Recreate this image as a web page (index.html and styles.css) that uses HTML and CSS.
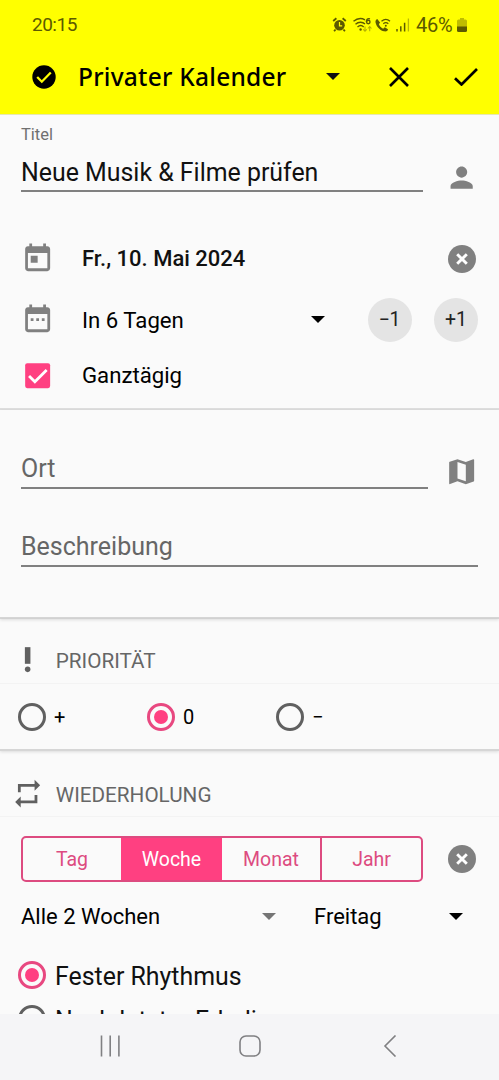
FILE: index.html
```html
<!DOCTYPE html>
<html lang="de">
<head>
<meta charset="utf-8">
<title>Privater Kalender</title>
<link rel="stylesheet" href="styles.css">
</head>
<body>
<svg width="0" height="0" class="defs">
  <symbol id="clear" viewBox="0 0 28 28"><circle cx="14" cy="14" r="14" fill="#808080"/><path d="M9.200 9.200l9.600 9.600M18.800 9.200l-9.600 9.600" stroke="#fff" stroke-width="2.900"/></symbol>
  <symbol id="caret" viewBox="0 0 14 7"><path d="M0 0h14L7 7z" fill="currentColor"/></symbol>
</svg>
<header class="top">
  <div class="status">
    <span class="time">20:15</span>
    <svg class="indicators" viewBox="0 0 78 18" fill="none" stroke="#5c5a00">
      <g><circle cx="7.500" cy="9.300" r="5.300" fill="#5c5a00" stroke="none"/><path d="M1.200 5l3.200-2.800M13.800 5l-3.200-2.800M3.500 13.500l-1.400 1.800M11.500 13.500l1.400 1.800" stroke-width="1.800"/><path d="M7.500 6v3.800h2.700" stroke="#ff0" stroke-width="1.200"/></g>
      <g stroke-width="1.400"><path d="M21.500 5.300c4-3.400 8.500-3.200 11.500-1.500M23.500 8.300c3-2.600 7-2.600 9.500-.3M25.500 11c2-1.700 4.500-1.700 6.200 0"/><circle cx="28.600" cy="13.500" r="1.200" fill="#5c5a00" stroke="none"/><path d="M38 2.800c-2.500-.8-3.800.8-3.600 3.200"/><circle cx="36.300" cy="6" r="1.700"/><path d="M33 10.500v4.800m-1.800-2l1.800 2 1.800-2M37.700 15.300v-4.800m-1.800 2l1.800-2 1.800 2" stroke="#b5b200" stroke-width="1.100"/></g>
      <path d="M45.300 2.900c-2 .7-2.300 2.600-1.300 5.100 1.500 3.800 4.700 6.700 8 7.300 2.200.4 3.700-.4 4-2.100l-3.200-2-1.700 1.500c-2.200-1-3.500-2.600-4.300-4.700l1.400-1.300z" fill="#5c5a00" stroke="none"/>
      <path d="M49.500 5.200c2.700-2.200 6-2.200 8.500 0M51.300 7.700c1.600-1.300 3.500-1.300 5 0" stroke-width="1.300"/><circle cx="53.800" cy="9.700" r="1" fill="#5c5a00" stroke="none"/>
      <path d="M65 15.500v-2.600M68.800 15.500V10.300M72.600 15.500V6.800" stroke-width="1.500"/><path d="M76.400 15.500V2.500" stroke="#bab800" stroke-width="1.300"/>
    </svg>
    <span class="percent">46%</span>
    <svg class="battery" viewBox="0 0 10 14"><path d="M3 0h4v1.500h1.500Q10 1.500 10 3v6H0V3q0-1.500 1.500-1.500H3z" fill="#bfbd00"/><path d="M0 8.500h10v4q0 1.500-1.500 1.500h-7Q0 14 0 12.500z" fill="#5c5a00"/></svg>
  </div>
  <div class="appbar">
    <svg class="done" viewBox="0 0 24 24"><circle cx="12" cy="12" r="11.700" fill="#000"/><path d="M5.200 12l4.600 4.700 9-9.200" fill="none" stroke="#ff0" stroke-width="2.300"/></svg>
    <h1>Privater Kalender</h1>
    <svg class="caret"><use href="#caret"/></svg>
    <svg class="cross" viewBox="0 0 20 20"><path d="M1 1l18 18M19 1L1 19" stroke="#000" stroke-width="2.600"/></svg>
    <svg class="tick" viewBox="0 0 24 18"><path d="M1 10.200l6.500 6.300L23 1" fill="none" stroke="#000" stroke-width="2.700"/></svg>
  </div>
</header>
<main>
  <section class="basics">
    <div class="label">Titel</div>
    <div class="field-row">
      <div class="field title">Neue Musik &amp; Filme prüfen</div>
      <svg class="icon person" viewBox="0 0 24 24"><path d="M12 12c2.210 0 4-1.790 4-4s-1.790-4-4-4-4 1.790-4 4 1.790 4 4 4zm0 2c-2.670 0-8 1.340-8 4v2h16v-2c0-2.660-5.330-4-8-4z"/></svg>
    </div>
    <div class="row date">
      <svg class="icon" viewBox="0 0 24 24"><path d="M19 3h-1V1h-2v2H8V1H6v2H5c-1.110 0-1.990.9-1.990 2L3 19c0 1.100.89 2 2 2h14c1.100 0 2-.9 2-2V5c0-1.100-.9-2-2-2zm0 16H5V8h14v11zM7 10h5v5H7z"/></svg>
      <span class="grow medium">Fr., 10. Mai 2024</span>
      <svg class="clear"><use href="#clear"/></svg>
    </div>
    <div class="row relative-day">
      <svg class="icon" viewBox="0 0 24 24"><path d="M9 11H7v2h2v-2zm4 0h-2v2h2v-2zm4 0h-2v2h2v-2zm2-8h-1V1h-2v2H8V1H6v2H5c-1.110 0-2 .9-2 2v14c0 1.100.89 2 2 2h14c1.100 0 2-.9 2-2V5c0-1.100-.9-2-2-2zm0 16H5V8h14v11z"/></svg>
      <span class="grow">In 6 Tagen</span>
      <svg class="caret"><use href="#caret"/></svg>
      <span class="step minus">−1</span>
      <span class="step">+1</span>
    </div>
    <div class="row allday">
      <svg class="icon" viewBox="0 0 24 24"><rect x="3" y="3" width="18" height="18" rx="1.500" fill="#ff4081"/><path d="M5.800 12.200l4.200 4.200 8.500-8.500" fill="none" stroke="#fff" stroke-width="2"/></svg>
      <span class="grow">Ganztägig</span>
    </div>
  </section>
  <section class="details">
    <div class="field-row">
      <div class="field hint ort">Ort</div>
      <svg class="icon map" viewBox="0 0 24 24"><path d="M20.500 3l-.16.030L15 5.100 9 3 3.360 4.900c-.210.070-.360.250-.360.480V20.500c0 .280.220.5.5.5l.16-.030L9 18.900l6 2.100 5.640-1.900c.210-.070.360-.250.360-.480V3.500c0-.280-.220-.5-.5-.5zM15 19l-6-2.110V5l6 2.110V19z"/></svg>
    </div>
    <div class="field hint desc">Beschreibung</div>
  </section>
  <section class="priority">
    <h2><svg class="icon" viewBox="0 0 24 24"><circle cx="12" cy="19" r="2"/><path d="M10 3h4v12h-4z"/></svg><span>PRIORITÄT</span></h2>
    <div class="radios">
      <span class="option"><i class="radio"></i>+</span>
      <span class="option"><i class="radio on"></i>0</span>
      <span class="option"><i class="radio"></i>−</span>
    </div>
  </section>
  <section class="repeat">
    <h2><svg class="icon" viewBox="0 0 24 24"><path d="M7 7h10v3l4-4-4-4v3H5v6h2V7zm10 10H7v-3l-4 4 4 4v-3h12v-6h-2v4z"/></svg><span>WIEDERHOLUNG</span></h2>
    <div class="period">
      <div class="segments"><span>Tag</span><span class="selected">Woche</span><span>Monat</span><span class="last">Jahr</span></div>
      <svg class="clear"><use href="#clear"/></svg>
    </div>
    <div class="selects">
      <div class="select every">Alle 2 Wochen<svg class="caret"><use href="#caret"/></svg></div>
      <div class="select weekday">Freitag<svg class="caret"><use href="#caret"/></svg></div>
    </div>
    <div class="rhythm"><i class="radio on"></i><span>Fester Rhythmus</span></div>
    <div class="rhythm"><i class="radio"></i><span>Nach letzter Erledi</span></div>
  </section>
</main>
<nav>
  <svg viewBox="0 0 22 22"><path d="M2.500 .5v21M11.200 .5v21M19.900 .5v21"/></svg>
  <svg viewBox="0 0 22 22"><rect x="1" y="1" width="20" height="20" rx="6"/></svg>
  <svg viewBox="0 0 22 22"><path d="M17.500 .5L7 11l10.500 10.500"/></svg>
</nav>
</body>
</html>
```
FILE: styles.css
```css
* { box-sizing: border-box; }
body {
  margin: 0;
  height: 1080px;
  display: flex;
  flex-direction: column;
  overflow: hidden;
  background: #fafafa;
  color: #111;
  font-family: Roboto, "Noto Sans", sans-serif;
  font-size: 22px;
}
svg { display: block; flex: none; }
.defs { display: none; }
h1, h2 { margin: 0; }

.top { height: 115px; flex: none; background: #ff0; border-bottom: 1px solid #e6e8b0; }
.status { height: 49px; display: flex; align-items: center; padding: 0 32px 0 32px; color: #5c5a00; font-size: 19px; }
.time { flex: 1; letter-spacing: -0.500px; }
.indicators { width: 78px; height: 18px; }
.percent { width: 38px; margin: 0 3px 0 6px; font-size: 20px; letter-spacing: -0.200px; }
.battery { width: 10px; height: 14px; }
.appbar { height: 55px; display: flex; align-items: center; padding: 0 21px 0 32px; }
.done { width: 24px; height: 24px; }
.appbar h1 { flex: 1; margin-left: 22px; font: 500 24.500px "Noto Sans", sans-serif; letter-spacing: 0.250px; color: #000; white-space: nowrap; }
.caret { width: 14px; height: 7px; }
.cross { width: 20px; height: 20px; margin-left: 49px; }
.tick { width: 24px; height: 18px; margin-left: 45px; }

main { flex: 1; min-height: 0; overflow: hidden; }
section { border-bottom: 2px solid #d6d6d6; box-shadow: 0 1px 3px rgba(0, 0, 0, 0.120); }
.icon { width: 33.300px; height: 33.300px; fill: #808080; }
.clear { width: 28px; height: 28px; margin-right: 2.500px; }
.grow { flex: 1; }
.field { border-bottom: 2px solid #808080; white-space: nowrap; }
.field-row { display: flex; justify-content: space-between; }

.basics { height: 295px; padding: 10px 21px 0; border-color: #dedede; box-shadow: none; }
.label { height: 19px; line-height: 19px; font-size: 16.500px; color: #707070; }
.title { width: 402px; height: 48px; line-height: 58px; font-size: 24.900px; }
.person { margin-top: 17px; }
.row { display: flex; align-items: center; color: #000; }
.row .grow { margin-left: 27.700px; font-size: 22.200px; }
.date { height: 61px; margin-top: 34px; }
.row .medium { font-size: 22px; font-weight: 500; color: #111; }
.relative-day { height: 61px; }
.step { width: 44px; height: 44px; border-radius: 50%; background: #e4e4e4; text-align: center; line-height: 44px; font-size: 19.500px; color: #222; }
.minus { margin: 0 22.500px 0 42.500px; }
.allday { height: 50px; }

.details { height: 209px; padding: 35px 21px 0; }
.hint { color: #666; font-size: 25px; }
.ort { width: 407px; height: 44px; line-height: 48px; }
.map { margin-top: 10px; }
.desc { height: 44px; line-height: 48px; margin-top: 34px; }

h2 { display: flex; align-items: center; padding-left: 11px; height: 65px; padding-top: 18px; border-bottom: 1px solid #f3f3f3; font-size: 20.700px; font-weight: 400; color: #666; }
h2 .icon { fill: #606060; margin-right: 11.500px; }
h2 span { padding-top: 2px; }
.priority { height: 132px; }
.radios { display: flex; height: 66px; align-items: center; padding-left: 18px; font-size: 20px; color: #000; }
.option { width: 129px; display: flex; align-items: center; gap: 8px; }
.radio { flex: none; width: 28px; height: 28px; border: 3px solid #606060; border-radius: 50%; display: grid; place-items: center; }
.radio.on { border: 3px solid #e84880; }
.radio.on::after { content: ""; width: 14px; height: 14px; border-radius: 50%; background: #ff4081; }

.repeat { border: 0; box-shadow: none; }
.repeat h2 { height: 66px; padding-top: 20px; }
.period { display: flex; align-items: center; justify-content: space-between; padding: 0 21px; margin-top: 19px; }
.segments { width: 402px; height: 46px; display: grid; grid-template-columns: 98px 101px 98px 1fr; border: 2px solid #dd4b80; border-radius: 5px; overflow: hidden; font-size: 19.500px; line-height: 43px; text-align: center; color: #dd4b80; }
.segments .selected { background: #ff4081; color: #fff; }
.segments .last { border-left: 2px solid #dd4b80; }
.selects { display: flex; justify-content: space-between; height: 68px; padding: 0 36px 0 21px; color: #000; }
.select { display: flex; align-items: center; justify-content: space-between; }
.every { width: 255px; }
.every .caret { color: #757575; }
.weekday { width: 149px; }
.rhythm { display: flex; align-items: center; gap: 9px; height: 44px; padding-left: 18px; font-size: 24.900px; white-space: nowrap; }
.rhythm span { padding-top: 3px; }
.selects + .rhythm { margin-top: 3px; }

nav { height: 66px; flex: none; display: flex; align-items: center; justify-content: space-between; padding: 0 99px; background: #f5f5f7; padding-bottom: 2px; }
nav svg { width: 22px; height: 22px; fill: none; stroke: #808083; stroke-width: 1.600; }
```
